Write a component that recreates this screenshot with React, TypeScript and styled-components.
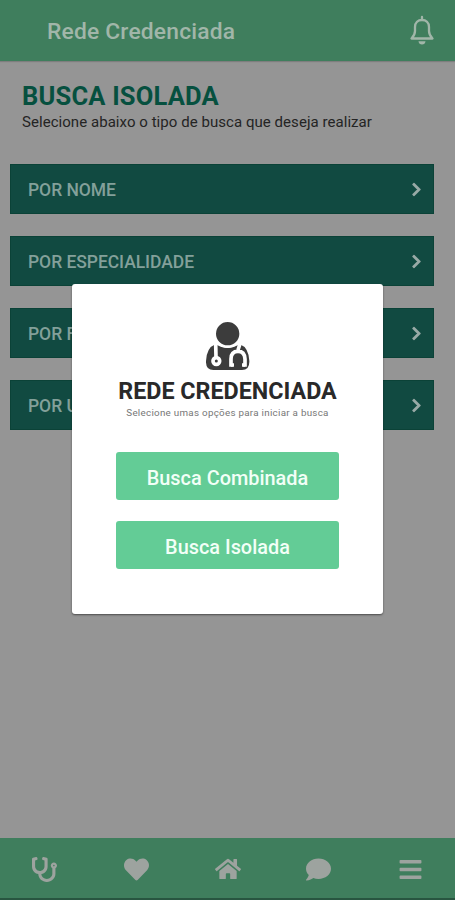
import React from "react";
import styled, { createGlobalStyle } from "styled-components";
import {
  FaBars,
  FaChevronRight,
  FaComment,
  FaHeart,
  FaHome,
  FaStethoscope,
} from "react-icons/fa";

const GlobalStyle = createGlobalStyle`
  * { box-sizing: border-box; }
  body { margin: 0; background: #959595; font-family: Roboto, "Liberation Sans", sans-serif; }
`;

const Screen = styled.div`
  position: relative;
  width: 455px;
  height: 900px;
  overflow: hidden;
  display: flex;
  flex-direction: column;
  background: #959595;
`;

const Header = styled.header`
  height: 61px;
  flex: none;
  display: flex;
  align-items: center;
  justify-content: space-between;
  padding: 0 20px 0 47px;
  background: #3f7e5d;
  box-shadow: 0 1px 1px rgba(0, 0, 0, 0.15);
  color: #a1b6a9;
`;

const HeaderTitle = styled.h1`
  margin: 3px 0 0;
  font-size: 22.8px;
  line-height: 28px;
  font-weight: 500;
  letter-spacing: 0.2px;
`;

const Content = styled.main`
  flex: 1;
  padding: 20px 21px 0 10px;
`;

const Title = styled.h2`
  margin: 0 0 0 12px;
  font-size: 25.5px;
  line-height: 31px;
  font-weight: 700;
  letter-spacing: 0.2px;
  color: #06503f;
`;

const Subtitle = styled.p`
  margin: 0 0 0 12px;
  font-size: 15px;
  line-height: 20px;
  letter-spacing: 0.05px;
  color: #242424;
  white-space: nowrap;
`;

const Options = styled.div`
  display: grid;
  gap: 22px;
  margin-top: 32px;
`;

const Option = styled.button`
  height: 50px;
  border: 1px solid #0b4237;
  padding: 2px 9px 0 17px;
  display: flex;
  align-items: center;
  justify-content: space-between;
  background: #114a41;
  color: #83a09a;
  font: 500 17.5px/24px Roboto, sans-serif;
  letter-spacing: -0.05px;

  svg {
    margin-top: -2px;
    color: #98aaa6;
    stroke: currentColor;
    stroke-width: 24px;
  }
`;

const Navigation = styled.nav`
  height: 62px;
  flex: none;
  display: grid;
  grid-template-columns: repeat(5, 91.3px);
  align-items: center;
  justify-items: center;
  justify-content: center;
  padding-top: 2px;
  background: #3f7e5d;
  border-bottom: 2px solid #285540;
  color: #9da39f;
`;

const Dialog = styled.section`
  position: absolute;
  left: 72px;
  top: 284px;
  width: 311px;
  height: 330px;
  padding: 37px 44px 0;
  display: flex;
  flex-direction: column;
  align-items: center;
  background: #fff;
  border-radius: 3px;
  box-shadow: 0 1px 2px rgba(0, 0, 0, 0.5);
`;

const DialogTitle = styled.h2`
  margin: 4px 0 0;
  font-size: 23.3px;
  line-height: 30px;
  font-weight: 700;
  color: #292929;
  white-space: nowrap;
`;

const DialogText = styled.p`
  margin: 0 0 32px;
  font-size: 9.8px;
  line-height: 14px;
  letter-spacing: 0.28px;
  color: #777;
  white-space: nowrap;
`;

const Action = styled.button`
  width: 223px;
  height: 48px;
  margin-bottom: 21px;
  padding: 5px 0 0;
  flex: none;
  border: 0;
  border-radius: 3px;
  background: #63cc96;
  color: #f2fff7;
  font: 500 19.9px/24px Roboto, sans-serif;
`;

const Bell = () => (
  <svg width="26" height="31" viewBox="0 0 26 31" fill="none" stroke="currentColor">
    <path
      d="M13 2V4.5M2.5 23.5C5 21 6 19.5 6 16V12C6 7.5 9 5 13 5S20 7.5 20 12V16C20 19.5 21 21 23.5 23.5Z"
      strokeWidth="2.3"
      strokeLinecap="round"
      strokeLinejoin="round"
    />
    <path d="M9.5 26.3H16.5Q16 29.5 13 29.5T9.5 26.3Z" fill="currentColor" stroke="none" />
  </svg>
);

const Doctor = () => (
  <svg width="44" height="51" viewBox="0 0 132 153">
    <path
      d="M28 70Q2 80 0 120Q-1 147 22 147H108Q131 147 130 120Q128 80 102 70Q64 92 28 70Z"
      fill="#3c3c3c"
    />
    <circle cx="65" cy="38" r="39" fill="#3c3c3c" stroke="#fff" strokeWidth="8" />
    <g fill="none" stroke="#fff" strokeWidth="11">
      <path d="M29 66L30 108M104 62L96 87M75 137V114Q75 91 96 91Q116 91 117 114V137" />
      <circle cx="31" cy="120" r="10" />
    </g>
    <path d="M75 132H84M108 132H117" stroke="#fff" strokeWidth="10" />
  </svg>
);

export default function App() {
  return (
    <>
      <GlobalStyle />
      <Screen>
        <Header>
          <HeaderTitle>Rede Credenciada</HeaderTitle>
          <Bell />
        </Header>
        <Content>
          <Title>BUSCA ISOLADA</Title>
          <Subtitle>Selecione abaixo o tipo de busca que deseja realizar</Subtitle>
          <Options>
            {["POR NOME", "POR ESPECIALIDADE", "POR F", "POR U"].map((label) => (
              <Option key={label}>
                {label}
                <FaChevronRight size={15} />
              </Option>
            ))}
          </Options>
        </Content>
        <Navigation>
          <FaStethoscope size={25} />
          <FaHeart size={25} />
          <FaHome size={26} />
          <FaComment size={25} />
          <FaBars size={25} />
        </Navigation>
        <Dialog>
          <Doctor />
          <DialogTitle>REDE CREDENCIADA</DialogTitle>
          <DialogText>Selecione umas opções para iniciar a busca</DialogText>
          <Action>Busca Combinada</Action>
          <Action>Busca Isolada</Action>
        </Dialog>
      </Screen>
    </>
  );
}
